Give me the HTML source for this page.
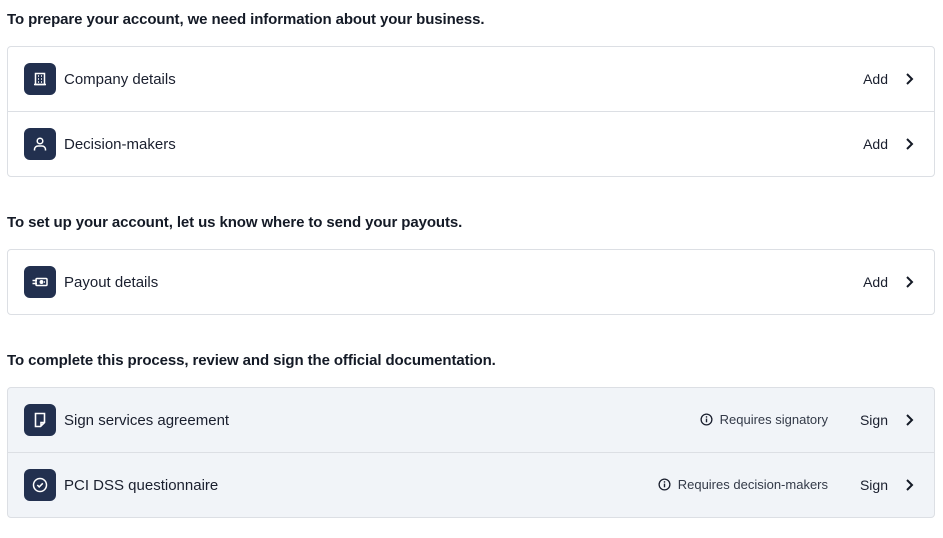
<!DOCTYPE html>
<html><head><style>
body{margin:0;width:943px;height:538px;background:#fff;font-family:"Liberation Sans",sans-serif;color:#1a1f2e;position:relative;overflow:hidden}
h2{position:absolute;left:7px;margin:0;font-size:15px;font-weight:bold;color:#141a26;letter-spacing:-0.1px}
.card{position:absolute;left:7px;width:926px;border:1px solid #dcdfe4;border-radius:4px;background:#fff}
.card.g{background:#f1f4f8}
.row{height:64px;position:relative;border-top:1px solid #dcdfe4}
.row:first-child{border-top:none}
.ic{position:absolute;left:16px;top:16px;width:32px;height:32px;border-radius:6px;background:#22304f}
.ic svg{position:absolute;left:7px;top:7px;width:18px;height:18px}
.t{position:absolute;left:56px;top:24px;font-size:15px}
.a{position:absolute;right:46px;top:24px;font-size:14px}
.ch{position:absolute;right:18px;top:25px}
.r{position:absolute;right:106px;top:24px;font-size:13px;color:#333a48;display:flex;align-items:center;gap:7px}
</style></head><body>
<h2 style="top:11px">To prepare your account, we need information about your business.</h2>
<div class="card" style="top:46px">
 <div class="row"><div class="ic"><svg viewBox="0 0 18 18" fill="none" stroke="#fff" stroke-width="1.5"><rect x="4.5" y="3.5" width="9" height="11"/><path d="M7 6h1M10 6h1M7 9h1M10 9h1M7 12h1M10 12h1M3 14.5h12"/></svg></div><div class="t">Company details</div><div class="a">Add</div><svg class="ch" width="12" height="14" viewBox="0 0 12 14"><path d="M3 2l5 5-5 5" stroke="#141a26" stroke-width="2" fill="none"/></svg></div>
 <div class="row"><div class="ic"><svg viewBox="0 0 18 18" fill="none" stroke="#fff" stroke-width="1.5"><circle cx="9" cy="6" r="2.8"/><path d="M3.5 15.5v-1a3.5 3.5 0 0 1 3.5-3.5h4a3.5 3.5 0 0 1 3.5 3.5v1"/></svg></div><div class="t">Decision-makers</div><div class="a">Add</div><svg class="ch" width="12" height="14" viewBox="0 0 12 14"><path d="M3 2l5 5-5 5" stroke="#141a26" stroke-width="2" fill="none"/></svg></div>
</div>
<h2 style="top:214px">To set up your account, let us know where to send your payouts.</h2>
<div class="card" style="top:249px">
 <div class="row"><div class="ic"><svg viewBox="0 0 18 18" fill="none" stroke="#fff" stroke-width="1.5"><rect x="5" y="5.5" width="11" height="7" rx="1"/><path d="M1.5 7.5h4.5M1.5 10.5h4.5"/><circle cx="10.5" cy="9" r="1.2" fill="#fff"/><path d="M13 9h1"/></svg></div><div class="t">Payout details</div><div class="a">Add</div><svg class="ch" width="12" height="14" viewBox="0 0 12 14"><path d="M3 2l5 5-5 5" stroke="#141a26" stroke-width="2" fill="none"/></svg></div>
</div>
<h2 style="top:352px">To complete this process, review and sign the official documentation.</h2>
<div class="card g" style="top:387px">
 <div class="row"><div class="ic"><svg viewBox="0 0 18 18" fill="none" stroke="#fff" stroke-width="1.6"><path d="M4.5 2.5h9v9l-4 4h-5z M10 15.5v-4h3.5"/></svg></div><div class="t">Sign services agreement</div><div class="r"><svg width="13" height="13" viewBox="0 0 14 14"><circle cx="7" cy="7" r="5.8" stroke="#1a1f2e" stroke-width="1.4" fill="none"/><path d="M7 6v4" stroke="#1a1f2e" stroke-width="1.5"/><circle cx="7" cy="4.2" r=".9" fill="#1a1f2e"/></svg>Requires signatory</div><div class="a">Sign</div><svg class="ch" width="12" height="14" viewBox="0 0 12 14"><path d="M3 2l5 5-5 5" stroke="#141a26" stroke-width="2" fill="none"/></svg></div>
 <div class="row"><div class="ic"><svg viewBox="0 0 18 18" fill="none" stroke="#fff" stroke-width="1.5"><circle cx="9" cy="9" r="6.5"/><path d="M6.3 9l1.9 1.9L11.8 7.3"/></svg></div><div class="t">PCI DSS questionnaire</div><div class="r"><svg width="13" height="13" viewBox="0 0 14 14"><circle cx="7" cy="7" r="5.8" stroke="#1a1f2e" stroke-width="1.4" fill="none"/><path d="M7 6v4" stroke="#1a1f2e" stroke-width="1.5"/><circle cx="7" cy="4.2" r=".9" fill="#1a1f2e"/></svg>Requires decision-makers</div><div class="a">Sign</div><svg class="ch" width="12" height="14" viewBox="0 0 12 14"><path d="M3 2l5 5-5 5" stroke="#141a26" stroke-width="2" fill="none"/></svg></div>
</div>
</body></html>
